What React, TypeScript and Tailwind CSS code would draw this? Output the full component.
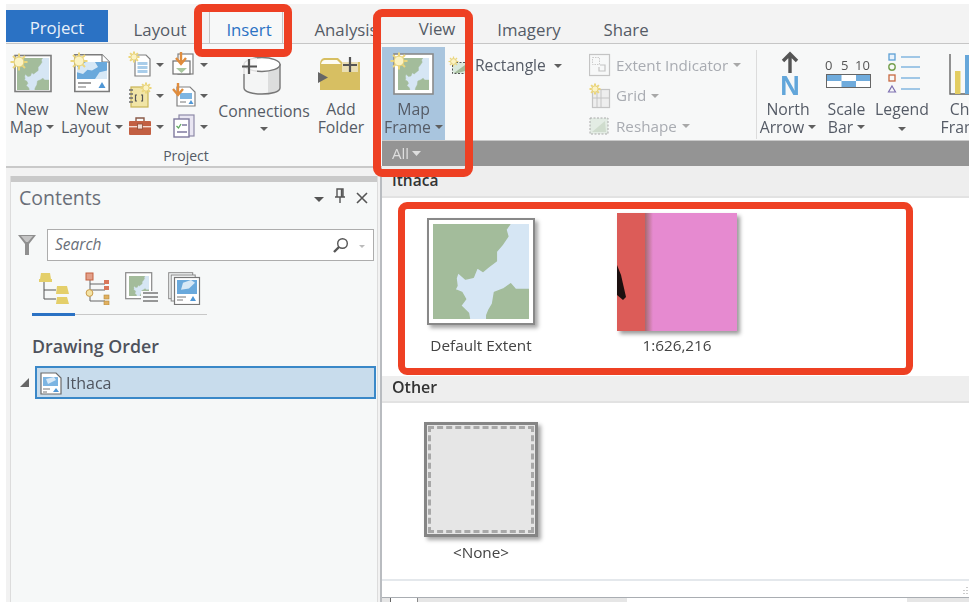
import React from "react";

const GREEN = "#a3bc9b";
const WATER = "#d6e6f4";
const GREEN_A = "0,0 80,0 76,6 78,13 72,22 66,29 66,39 58,45 52,50 46,46 42,56 34,58 26,51 24,57 25,65 23,69 30,72 34,79 29,86 37,94 38,100 0,100";
const GREEN_B = "100,69 86,69 81,63 74,68 64,72 62,84 58,91 56,96 56,100 100,100";

function MapFill({ x, y, w, h }: { x: number; y: number; w: number; h: number }) {
  return (
    <svg x={x} y={y} width={w} height={h} viewBox="0 0 100 100" preserveAspectRatio="none">
      <rect width="100" height="100" fill={WATER} />
      <polygon points={GREEN_A} fill={GREEN} stroke={GREEN} strokeWidth="1.5" strokeLinejoin="round" />
      <polygon points={GREEN_B} fill={GREEN} stroke={GREEN} strokeWidth="1.5" strokeLinejoin="round" />
    </svg>
  );
}

function Sun({ cx, cy, r = 8 }: { cx: number; cy: number; r?: number }) {
  const rays = [0, 45, 90, 135, 180, 225, 270, 315];
  return (
    <g>
      {rays.map((a) => (
        <line
          key={a}
          x1={cx + Math.cos((a * Math.PI) / 180) * r * 0.6}
          y1={cy + Math.sin((a * Math.PI) / 180) * r * 0.6}
          x2={cx + Math.cos((a * Math.PI) / 180) * r}
          y2={cy + Math.sin((a * Math.PI) / 180) * r}
          stroke="#ecd67a"
          strokeWidth={r > 5 ? 2 : 1.2}
        />
      ))}
      <circle cx={cx} cy={cy} r={r * 0.58} fill="#fbf3c4" stroke="#e6cf72" strokeWidth="1" />
    </g>
  );
}

function Caret({ light = false, dark = false }: { light?: boolean; dark?: boolean }) {
  return (
    <svg width="8" height="4" viewBox="0 0 8 4" className="inline-block shrink-0 align-middle">
      <polygon points="0,0 8,0 4,4" fill={light ? "#a8a8a8" : dark ? "#4a4a4a" : "#5f5f5f"} />
    </svg>
  );
}

function Big({
  wClass,
  icon,
  lines,
  caret,
  low,
}: {
  wClass: string;
  icon: React.ReactNode;
  lines: string[];
  caret?: "inline" | "below";
  low?: boolean;
}) {
  return (
    <div className={`${wClass} flex shrink-0 flex-col items-center`}>
      <div className="h-[56px] w-full">{icon}</div>
      {lines.map((l, i) => (
        <div
          key={l}
          className={`flex h-[18px] items-center gap-[4px] whitespace-nowrap text-[15.8px] leading-[18px] ${low ? "mt-[2px]" : ""}`}
        >
          {l}
          {caret === "inline" && i === lines.length - 1 && <Caret />}
        </div>
      ))}
      {caret === "below" && (
        <div className={`flex h-[18px] items-center ${low ? "" : "mt-[2px]"}`}>
          <Caret />
        </div>
      )}
    </div>
  );
}

function NewMapIcon() {
  return (
    <svg width="52" height="56">
      <rect x="9" y="11.5" width="36" height="36" fill="#fff" stroke="#7c7c7c" strokeWidth="1.6" />
      <MapFill x={11} y={14} w={32} h={32} />
      <Sun cx={13} cy={18} r={8.5} />
    </svg>
  );
}

function NewLayoutIcon() {
  return (
    <svg width="68" height="56">
      <path d="M16.8 10.8H44L51.2 18V47.5H16.8Z" fill="#fff" stroke="#7c7c7c" strokeWidth="1.6" />
      <path d="M44 10.8V18H51.2" fill="#fff" stroke="#7c7c7c" strokeWidth="1.2" />
      <svg x="19" y="18" width="30" height="17" viewBox="0 0 100 100" preserveAspectRatio="none">
        <rect width="100" height="100" fill="#6aa9dc" />
        <polygon points="30,0 60,0 70,30 50,50 35,45 20,70 0,60 0,30" fill="#d7e8f6" />
        <polygon points="75,60 100,50 100,100 60,100" fill="#d7e8f6" />
      </svg>
      <line x1="20" y1="39" x2="33" y2="39" stroke="#777" strokeWidth="1.4" />
      <line x1="20" y1="43" x2="28" y2="43" stroke="#999" strokeWidth="1.4" />
      <polygon points="44,38 47.5,44 40.5,44" fill="#4f97d6" />
      <Sun cx={21} cy={17} r={8.5} />
    </svg>
  );
}

function ConnectionsIcon() {
  return (
    <svg width="104" height="56">
      <path d="M32 20V44C32 52 68 52 68 44V20Z" fill="#f4f5f5" />
      <path d="M56 28V49C62 48 68 47 68 44V20C66 24 60 27 56 28Z" fill="#dcdddd" />
      <path d="M32 20V44C32 52 68 52 68 44V20" fill="none" stroke="#777" strokeWidth="1.4" />
      <ellipse cx="50" cy="20.5" rx="18" ry="7" fill="#fff" stroke="#777" strokeWidth="1.4" />
      <rect x="29" y="14" width="16" height="16" fill="#f7f8f8" opacity="0.8" />
      <path d="M37 15V30M30 22.5H45" stroke="#555" strokeWidth="2.2" />
    </svg>
  );
}

function AddFolderIcon() {
  return (
    <svg width="50" height="56">
      <path d="M4 20Q4 15 8 14H22L26 18H44V46H4Z" fill="#d7bf62" />
      <path d="M5 20Q6 16 9 16H21L25 20Z" fill="#fdfcf4" />
      <rect x="26" y="15" width="16" height="13" fill="#f7f8f8" opacity="0.55" />
      <path d="M34 13V28M27 21H41" stroke="#555" strokeWidth="2.2" />
      <polygon points="2,28 2,39 12,33.5" fill="#666" />
    </svg>
  );
}

function MapFrameIcon() {
  return (
    <svg width="63" height="56">
      <rect x="12" y="10" width="39" height="40" fill="#fff" stroke="#8a8a8a" strokeWidth="1.6" />
      <MapFill x={16} y={14} w={31} h={32} />
      <Sun cx={17} cy={17} r={8.5} />
    </svg>
  );
}

function NorthIcon() {
  return (
    <svg width="62" height="56">
      <path d="M33 10V29M26 17L33 10L40 17" fill="none" stroke="#555" strokeWidth="3.4" />
      <text x="33" y="51" textAnchor="middle" fontSize="27" fontWeight="700" fill="#62a6da" fontFamily="'Liberation Sans', sans-serif">
        N
      </text>
    </svg>
  );
}

function ScaleIcon() {
  const f = "'Open Sans', sans-serif";
  return (
    <svg width="55" height="56">
      <text x="6" y="26" fontSize="13" fill="#555" fontFamily={f}>0</text>
      <text x="22" y="26" fontSize="13" fill="#555" fontFamily={f}>5</text>
      <text x="36" y="26" fontSize="13" fill="#555" fontFamily={f}>10</text>
      <rect x="7.5" y="30.5" width="44" height="13" fill="#fff" stroke="#666" />
      <rect x="8" y="31" width="14.5" height="6" fill="#6fabdc" />
      <rect x="37" y="31" width="14" height="6" fill="#6fabdc" />
      <rect x="22.5" y="37" width="14.5" height="6" fill="#6fabdc" />
    </svg>
  );
}

function LegendIcon() {
  const lines = [13, 23, 34, 45];
  return (
    <svg width="56" height="56">
      <rect x="15" y="10" width="6" height="6" fill="#e8f2fb" stroke="#5c9fd4" strokeWidth="1.3" />
      <circle cx="18" cy="23" r="3.2" fill="none" stroke="#76a04f" strokeWidth="1.4" />
      <rect x="15" y="31" width="6" height="6" fill="none" stroke="#c8683f" strokeWidth="1.3" />
      <polygon points="18,42 21.5,48 14.5,48" fill="none" stroke="#7d6fb0" strokeWidth="1.2" />
      {lines.map((y) => (
        <line key={y} x1="27" y1={y} x2="46" y2={y} stroke="#66a7da" strokeWidth="1.2" />
      ))}
    </svg>
  );
}

function ChartIcon() {
  return (
    <svg width="76" height="56">
      <path d="M18 10V50H58" fill="none" stroke="#666" strokeWidth="1.4" />
      <rect x="23" y="27" width="5.5" height="23" fill="#e3cd62" />
      <rect x="33" y="11" width="8" height="39" fill="#66a7da" />
    </svg>
  );
}

/* small ribbon icons */
function DocSun() {
  return (
    <svg width="24" height="26">
      <path d="M7 4H18L22 8V25H7Z" fill="#fff" stroke="#808080" strokeWidth="1.2" />
      <rect x="9.5" y="11" width="10" height="3" fill="#a9cdea" />
      <rect x="9.5" y="15" width="10" height="3" fill="#a9cdea" />
      <rect x="9.5" y="19" width="10" height="3" fill="#a9cdea" />
      <Sun cx={6} cy={6} r={5.5} />
    </svg>
  );
}
function DocDown() {
  return (
    <svg width="26" height="26">
      <rect x="7" y="3" width="15" height="20" fill="#fff" stroke="#808080" strokeWidth="1.2" />
      <rect x="2" y="10" width="17" height="13" fill="#fff" stroke="#707070" strokeWidth="1.2" />
      <polygon points="5,17 16,17 10.5,22" fill="#a9c79f" />
      <path d="M10 1V11M5 7L10 13L15 7" fill="none" stroke="#e08c3c" strokeWidth="2.4" />
    </svg>
  );
}
function NoteSun() {
  return (
    <svg width="24" height="26">
      <rect x="3" y="5" width="17" height="20" fill="#f1e5a6" stroke="#c9b455" strokeWidth="1.2" />
      <path d="M1 8H5M1 12H5M1 16H5M1 20H5" stroke="#6e6e6e" strokeWidth="1.3" />
      <path d="M9 13H7.5V19H9M13 13H14.5V19H13" fill="none" stroke="#555" strokeWidth="1.2" />
      <Sun cx={18} cy={6} r={5.5} />
    </svg>
  );
}
function LayoutDown() {
  return (
    <svg width="26" height="26">
      <path d="M6 5H19L24 10V24H6Z" fill="#fff" stroke="#808080" strokeWidth="1.2" />
      <rect x="9" y="11" width="12" height="6" fill="#7db5e2" />
      <line x1="9" y1="20" x2="15" y2="20" stroke="#777" />
      <polygon points="20,18 22.5,22 17.5,22" fill="#4f97d6" />
      <path d="M7 1V11M2 7L7 13L12 7" fill="none" stroke="#e08c3c" strokeWidth="2.4" />
    </svg>
  );
}
function Toolbox() {
  return (
    <svg width="24" height="24">
      <path d="M8 7V4H16V7" fill="none" stroke="#8b5a48" strokeWidth="1.4" />
      <rect x="1" y="7" width="22" height="14" rx="1" fill="#c25f42" />
      <rect x="1" y="12" width="22" height="1.4" fill="#f3dcd3" />
      <rect x="9.5" y="10" width="5" height="5" fill="#f3dcd3" stroke="#8b4a36" strokeWidth="0.8" />
    </svg>
  );
}
function FormDoc() {
  return (
    <svg width="26" height="26">
      <rect x="8" y="2" width="15" height="21" fill="#e9e6f2" stroke="#8e8aa8" strokeWidth="1.2" />
      <rect x="3" y="6" width="15" height="18" fill="#fff" stroke="#7f7a9e" strokeWidth="1.4" />
      <path d="M5.5 13L7.5 15L10 11" fill="none" stroke="#5fa85f" strokeWidth="1.3" />
      <path d="M11 12H16M6 19H16" stroke="#7f7a9e" strokeWidth="1.3" />
    </svg>
  );
}

function RectangleIcon() {
  return (
    <svg width="20" height="20">
      <rect x="4.5" y="6.5" width="14" height="11" fill="#d9e9dd" stroke="#555" strokeDasharray="2 1.5" />
      <polygon points="6,17 17,9 17,15 10,17" fill="#a3bc9b" />
      <Sun cx={5.5} cy={5.5} r={5} />
    </svg>
  );
}
function ExtentIcon() {
  return (
    <svg width="22" height="24">
      <rect x="0.5" y="1.5" width="20" height="21" fill="#f7f8f8" stroke="#c4c4c4" strokeWidth="1.2" />
      <rect x="3.5" y="4.5" width="7" height="7" fill="none" stroke="#ccc" strokeDasharray="1.5 1" />
      <path d="M11 12H16V18H10V14" fill="none" stroke="#c4c4c4" strokeWidth="1.2" />
    </svg>
  );
}
function GridIcon() {
  return (
    <svg width="22" height="26">
      <rect x="3.5" y="6.5" width="17" height="18" fill="#eee" stroke="#c4c4c4" strokeWidth="1.2" />
      <path d="M12 6V25M3 15H21M8 6V25" stroke="#c4c4c4" />
      <Sun cx={6} cy={6} r={5.5} />
    </svg>
  );
}
function ReshapeIcon() {
  return (
    <svg width="21" height="18">
      <rect x="1" y="1" width="18" height="16" fill="#e3ece4" stroke="#aaa" strokeDasharray="2 1.5" />
      <polygon points="3,15 16,4 17,15" fill="#cfdccd" />
    </svg>
  );
}

function SmallCell({ icon, wClass }: { icon: React.ReactNode; wClass: string }) {
  return (
    <div className={`flex ${wClass} items-center`}>
      <div className="flex w-[28px] justify-center">{icon}</div>
      <div className="ml-[2px]">
        <Caret />
      </div>
    </div>
  );
}

function ToolRow({ icon, label, disabled }: { icon: React.ReactNode; label: string; disabled?: boolean }) {
  return (
    <div className="flex h-[30.5px] items-center">
      <div className="flex w-[27px] justify-center">{icon}</div>
      <span className={`ml-[3px] whitespace-nowrap text-[15.2px] ${disabled ? "text-[#a9acb2]" : ""}`}>{label}</span>
      <span className="ml-[5px] flex items-center">
        <Caret light={disabled} />
      </span>
    </div>
  );
}

function Tab({ label, className }: { label: string; className: string }) {
  return <div className={`flex items-center justify-center whitespace-nowrap text-[16.8px] ${className}`}>{label}</div>;
}

function TreeIcons() {
  return (
    <div className="ml-[22px] mt-[11px] flex h-[33px] items-center">
      <svg width="36" height="33" className="ml-[5px]">
        <path d="M2 9H10M6 9V27H18M6 18H18" fill="none" stroke="#555" strokeWidth="1" />
        <path d="M3 1H12L13 7H2Z" fill="#e4cf6a" />
        <rect x="1" y="7" width="13" height="3" fill="#e4cf6a" />
        <path d="M19 14H29L31 22H18Z" fill="#e4cf6a" />
        <path d="M19 25H29L31 32H18Z" fill="#e4cf6a" />
      </svg>
      <svg width="26" height="33" className="ml-[11px]">
        <path d="M3 8V29H18M3 12H18M3 18H18" fill="none" stroke="#666" strokeWidth="1" transform="translate(2 0)" />
        <rect x="1" y="1" width="7" height="7" fill="#e2a08a" stroke="#c4603f" />
        <rect x="19" y="8" width="5" height="4" fill="#d9775a" />
        <rect x="19" y="14" width="5" height="4" fill="#d9775a" />
        <circle cx="4.5" cy="21" r="3.4" fill="#f4e3a4" stroke="#c99a4a" />
        <rect x="19" y="23" width="5" height="4" fill="#e0b060" stroke="#b58a3c" strokeWidth="0.6" />
        <rect x="19" y="29" width="5" height="4" fill="#e0b060" stroke="#b58a3c" strokeWidth="0.6" />
      </svg>
      <svg width="34" height="33" className="ml-[14px]">
        <rect x="0.7" y="0.7" width="26" height="26" fill="#fff" stroke="#888" strokeWidth="1.2" />
        <MapFill x={4} y={4} w={20} h={20} />
        <rect x="16" y="19" width="18" height="14" fill="#f6f8f8" />
        <path d="M18 21H33M18 25H33M18 29H33" stroke="#777" strokeWidth="1.4" />
      </svg>
      <svg width="34" height="33" className="ml-[9px]">
        <rect x="0.7" y="0.7" width="24" height="26" fill="#f6f8f8" stroke="#888" />
        <rect x="3.2" y="3" width="24" height="26" fill="#f6f8f8" stroke="#888" />
        <rect x="6.5" y="5.5" width="25" height="27" fill="#fff" stroke="#777" strokeWidth="1.2" />
        <svg x="9" y="8" width="20" height="14" viewBox="0 0 100 100" preserveAspectRatio="none">
          <rect width="100" height="100" fill="#6aa9dc" />
          <polygon points="30,20 70,0 90,20 60,60 20,70" fill="#d7e8f6" />
        </svg>
        <path d="M9 25H18M9 28H15" stroke="#777" />
        <polygon points="25,24 28,29 22,29" fill="#4f97d6" />
      </svg>
    </div>
  );
}

export default function App() {
  return (
    <div className="relative h-[602px] w-[974px] overflow-hidden bg-white font-['Open_Sans',sans-serif] text-[#555b66]">
      <div className="flex h-full flex-col pl-[6px] pr-[5px] pt-[4px] blur-[0.35px]">
        {/* tabs */}
        <div className="flex h-[40px] shrink-0 items-end overflow-hidden border-b border-[#c6c6c6] bg-[#f3f3f3]">
          <Tab label="Project" className="mb-[1px] h-[32px] w-[102px] bg-[#2b72c4] pt-[4px] text-[#e8f0fa]" />
          <Tab label="Layout" className="ml-[26px] h-[39px] w-[52px] pt-[12px]" />
          <Tab label="Insert" className="ml-[23px] h-[34px] w-[74px] border-x border-t border-[#c6c6c6] bg-[#f7f8f8] pl-[6px] pt-[7px] text-[#2b72c4]" />
          <Tab label="Analysis" className="ml-[30px] h-[39px] w-[66px] pt-[12px]" />
          <Tab label="View" className="ml-[39px] h-[39px] w-[38px] pt-[11px]" />
          <Tab label="Imagery" className="ml-[41px] h-[39px] w-[64px] pt-[12px]" />
          <Tab label="Share" className="ml-[43px] h-[39px] w-[44px] pt-[12px]" />
        </div>

        <div className="flex min-h-0 flex-1">
          {/* left column */}
          <div className="flex w-[376px] shrink-0 flex-col">
            <div className="flex h-[124px] shrink-0 flex-col border-b-2 border-[#c9c9c9] bg-[#f7f8f8]">
              <div className="flex h-[102px]">
                <Big wClass="w-[52px]" icon={<NewMapIcon />} lines={["New", "Map"]} caret="inline" />
                <Big wClass="w-[68px]" icon={<NewLayoutIcon />} lines={["New", "Layout"]} caret="inline" />
                <div className="flex w-[86px] flex-col pt-[4px]">
                  {[
                    [<DocSun key="a" />, <DocDown key="b" />],
                    [<NoteSun key="c" />, <LayoutDown key="d" />],
                    [<Toolbox key="e" />, <FormDoc key="f" />],
                  ].map((row, i) => (
                    <div key={i} className="flex h-[31px] items-center">
                      <SmallCell icon={row[0]} wClass="w-[44px]" />
                      <SmallCell icon={row[1]} wClass="w-[42px]" />
                    </div>
                  ))}
                </div>
                <Big wClass="w-[104px]" icon={<ConnectionsIcon />} lines={["Connections"]} caret="below" low />
                <Big wClass="w-[50px]" icon={<AddFolderIcon />} lines={["Add", "Folder"]} />
              </div>
              <div className="mt-[1px] flex w-[360px] justify-center text-[14px] leading-[20px]">Project</div>
            </div>
            <div className="flex min-h-0 flex-1 flex-col border-r-2 border-[#b9bcc0] bg-[#f2f2f2] pl-[4px] pr-[2px] pt-[8px]">
              <div className="flex min-h-0 flex-1 flex-col border-l border-r border-[#dcdcdc] bg-[#f6f8f8]">
                <div className="h-[6px] shrink-0 bg-[#c9c9c9]" />
                {/* title */}
                <div className="flex h-[29px] items-center pl-[8px] pr-[6px] pt-[2px]">
                  <span className="text-[19.5px] text-[#6a6f78]">Contents</span>
                  <div className="ml-auto flex items-center">
                    <svg width="10" height="5" className="mt-[3px]">
                      <polygon points="0,0 10,0 5,5" fill="#555" />
                    </svg>
                    <svg width="12" height="16" className="ml-[10px] mb-[3px]" fill="none" stroke="#555" strokeWidth="1.4">
                      <path d="M3 1H9V9H3ZM1 9H11M6 9V15M7.5 1V9" />
                    </svg>
                    <svg width="12" height="12" className="ml-[10px] mr-[3px]" fill="none" stroke="#555" strokeWidth="1.6">
                      <path d="M1 1L11 11M11 1L1 11" />
                    </svg>
                  </div>
                </div>
                {/* search */}
                <div className="mt-[18px] flex items-center pl-[7px]">
                  <svg width="18" height="22" viewBox="0 0 18 22">
                    <polygon points="0,1 18,1 11,10 11,21 7,21 7,10" fill="#8f8f8f" />
                    <polygon points="3,2 15,2 10,8 8,8" fill="#c4c4c4" />
                  </svg>
                  <div className="ml-[11px] flex h-[32px] w-[327px] items-center border border-[#adadad] bg-white pl-[7px] pr-[8px]">
                    <span className="text-[15.5px] italic text-[#6a6f78]">Search</span>
                    <svg width="17" height="17" viewBox="0 0 17 17" className="ml-auto" fill="none" stroke="#555">
                      <circle cx="10.5" cy="6.5" r="4.8" strokeWidth="1.4" />
                      <path d="M7 10L2 15" strokeWidth="2.4" />
                    </svg>
                    <svg width="6" height="3" className="ml-[10px] mt-[2px]">
                      <polygon points="0,0 6,0 3,3" fill="#bbb" />
                    </svg>
                  </div>
                </div>
                <TreeIcons />
                <div className="ml-[21px] mt-[8px] flex h-[4px] w-[175px]">
                  <div className="h-[3px] w-[43px] bg-[#2b72c4]" />
                  <div className="mt-[1px] h-[1px] flex-1 bg-[#c8c8c8]" />
                </div>
                <div className="ml-[21px] mt-[17px] text-[17.8px] font-semibold leading-[24px] text-[#4e525c]">Drawing Order</div>
                <div className="ml-[9px] mt-[8px] flex items-center">
                  <svg width="9" height="9">
                    <polygon points="9,0 9,9 0,9" fill="#666" />
                  </svg>
                  <div className="ml-[6px] flex h-[33px] w-[341px] items-center border-2 border-[#3a88c8] bg-[#c8dcec] pl-[2px]">
                    <svg width="24" height="24">
                      <path d="M2 2H17L22 7V23H2Z" fill="#fff" stroke="#6a6a6a" strokeWidth="1.2" />
                      <rect x="4" y="6" width="15" height="9" fill="#7db5e2" />
                      <polygon points="7,8 15,6 17,9 9,13" fill="#d7e8f6" />
                      <path d="M4 18H11M4 21H8" stroke="#777" />
                      <polygon points="17,17 20,21 14,21" fill="#4f97d6" />
                    </svg>
                    <span className="ml-[3px] text-[16px] text-[#50555f]">Ithaca</span>
                  </div>
                </div>
              </div>
            </div>
          </div>

          {/* right column */}
          <div className="flex min-w-0 flex-1 flex-col overflow-hidden">
            <div className="flex h-[97px] shrink-0 border-b border-[#c9c9c9] bg-[#f7f8f8]">
              <div className="mt-[3px] h-[93px] w-[63px] shrink-0 bg-[#a9c5de]">
                <div className="-mt-[3px] flex flex-col items-center">
                  <Big wClass="w-[63px]" icon={<MapFrameIcon />} lines={["Map", "Frame"]} caret="inline" />
                </div>
              </div>
              <div className="w-[138px] shrink-0 pl-[3px] pt-[6px]">
                <div className="flex h-[31px] items-center">
                  <RectangleIcon />
                  <span className="ml-[7px] whitespace-nowrap text-[15.6px]">Rectangle</span>
                  <span className="ml-[8px] flex items-center">
                    <Caret />
                  </span>
                </div>
              </div>
              <div className="w-[173px] shrink-0 pl-[3px] pt-[6px]">
                <ToolRow icon={<ExtentIcon />} label="Extent Indicator" disabled />
                <ToolRow icon={<GridIcon />} label="Grid" disabled />
                <ToolRow icon={<ReshapeIcon />} label="Reshape" disabled />
              </div>
              <div className="mb-[1px] mt-[6px] w-[1px] shrink-0 bg-[#dcdcdc]" />
              <Big wClass="w-[62px]" icon={<NorthIcon />} lines={["North", "Arrow"]} caret="inline" />
              <Big wClass="w-[55px]" icon={<ScaleIcon />} lines={["Scale", "Bar"]} caret="inline" />
              <Big wClass="w-[56px]" icon={<LegendIcon />} lines={["Legend"]} caret="below" />
              <div className="ml-[2px]">
                <Big wClass="w-[76px]" icon={<ChartIcon />} lines={["Chart", "Frame"]} caret="inline" />
              </div>
            </div>
            <div className="flex h-[25px] shrink-0 items-center bg-[#949494] pl-[10px] text-[15px] text-[#dedede]">
              All
              <svg width="9" height="5" className="ml-[3px]">
                <polygon points="0,0 9,0 4.5,5" fill="#dedede" />
              </svg>
            </div>
            <div className="flex h-[32px] shrink-0 items-center border-b-2 border-[#e2e2e2] bg-[#eeeeee] pl-[10px] text-[15.5px] font-semibold text-[#333]">
              Ithaca
            </div>
            <div className="flex h-[178px] shrink-0 items-start bg-white pl-[45px]">
              <div className="mt-[20px] flex w-[108px] flex-col items-center">
                <div className="h-[107px] w-[108px] border-2 border-[#888] bg-white p-[4px] shadow-[3px_3px_4px_rgba(0,0,0,0.35)]">
                  <svg width="96" height="95" className="block">
                    <MapFill x={0} y={0} w={96} h={95} />
                  </svg>
                </div>
                <div className="mt-[10px] whitespace-nowrap text-[15.3px] leading-[20px] text-[#444]">Default Extent</div>
              </div>
              <div className="ml-[82px] mt-[15px] flex w-[120px] flex-col items-center">
                <div className="relative flex h-[118px] w-[120px] shadow-[3px_3px_4px_rgba(0,0,0,0.4)]">
                  <div className="w-[28px] bg-[#dc5c58]" />
                  <div className="w-[8px] bg-gradient-to-r from-[#a56a70] to-[#e68ad0]" />
                  <div className="flex-1 bg-[#e68ad0]" />
                  <svg width="10" height="36" className="absolute left-0 top-[52px]">
                    <polygon points="0,0 4,10 9,32 6,35 0,30" fill="#1c0f0f" />
                  </svg>
                </div>
                <div className="mt-[4px] whitespace-nowrap text-[15.3px] leading-[20px] text-[#444]">1:626,216</div>
              </div>
            </div>
            <div className="flex h-[27px] shrink-0 items-center border-b-2 border-[#e2e2e2] bg-[#eeeeee] pb-[3px] pl-[10px] text-[16px] font-semibold text-[#333]">
              Other
            </div>
            <div className="flex h-[176px] shrink-0 items-start bg-white pl-[42px]">
              <div className="mt-[19px] flex w-[114px] flex-col items-center">
                <div className="h-[115px] w-[114px] border-[3px] border-[#858585] bg-[#e6e6e6] p-[1px] shadow-[3px_3px_4px_rgba(0,0,0,0.35)]">
                  <div className="h-full w-full border-[3px] border-dashed border-[#a8a8a8]" />
                </div>
                <div className="mt-[5px] whitespace-nowrap text-[15.3px] leading-[20px] text-[#444]">&lt;None&gt;</div>
              </div>
            </div>
            <div className="h-[2px] shrink-0 bg-[#e4e8ec]" />
            <div className="relative h-[17px] shrink-0 border-b border-[#a9adb2] bg-white">
              <svg width="6" height="8" className="absolute right-0 top-[5px]">
                <path d="M4 1V2M1 4V5M4 4V5M1 7V8M4 7V8" stroke="#999" />
              </svg>
            </div>
            <div className="flex flex-1 bg-[#e6e6e6]">
              <div className="w-[8px]" />
              <div className="w-[27px] border-l border-[#666] bg-white" />
              <div className="w-[210px] border-l border-[#888]" />
              <div className="w-[280px] bg-white" />
            </div>
          </div>
        </div>
      </div>

      {/* annotation boxes */}
      <div className="absolute left-[194px] top-[4px] h-[53px] w-[98px] rounded-[8px] border-[8px] border-[#ee4023]" />
      <div className="absolute left-[373px] top-[9px] h-[168px] w-[100px] rounded-[9px] border-[8px] border-[#ee4023]" />
      <div className="absolute left-[398px] top-[202px] h-[173px] w-[515px] rounded-[9px] border-[7px] border-[#ee4023]" />
    </div>
  );
}
